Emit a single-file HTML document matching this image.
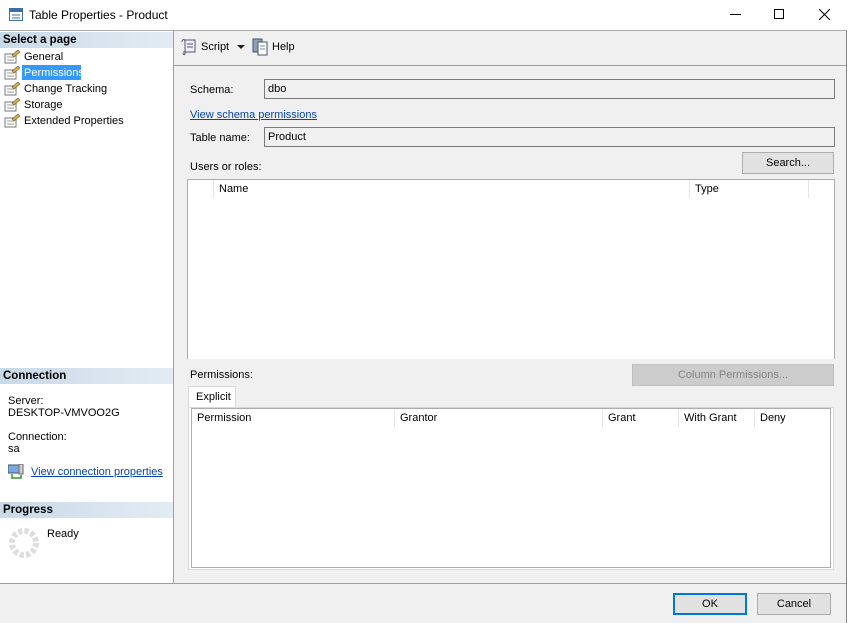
<!DOCTYPE html>
<html><head><style>
*{margin:0;padding:0;box-sizing:border-box}
body{width:851px;height:623px;background:#fff;font-family:"Liberation Sans",sans-serif;font-size:11px;color:#000;position:relative;overflow:hidden}
.a{position:absolute}
.hdr{position:absolute;left:0;width:173px;height:16px;background:linear-gradient(to right,#c9d9e8,#e3ecf4);font-weight:bold;font-size:11.5px;padding:2px 3px;color:#000}
.ico{position:absolute;width:16px;height:14px}
.nav{position:absolute;left:24px}
.inp{position:absolute;left:264px;width:571px;height:20px;border:1px solid #7a7a7a;background:#f0f0f0;padding:3px 3px}
.btn{position:absolute;background:#e1e1e1;border:1px solid #adadad;text-align:center;line-height:20px}
.col{position:absolute;top:0;height:18px;border-left:1px solid #e5e5e5;padding:3px 5px}
a{color:#0645ad;text-decoration:underline}
</style></head><body>
<svg class="a" style="left:9px;top:8px" width="14" height="13"><rect x="0.5" y="0.5" width="13" height="12" fill="#fff" stroke="#3c6ea8"/><rect x="1" y="1" width="12" height="3" fill="#3c6ea8"/><line x1="3" y1="7" x2="11" y2="7" stroke="#3c6ea8"/><line x1="3" y1="10" x2="11" y2="10" stroke="#3c6ea8"/></svg>
<div class="a" style="left:29px;top:8px;font-size:12px">Table Properties - Product</div>
<div class="a" style="left:730px;top:14px;width:11px;height:1px;background:#000"></div>
<div class="a" style="left:774px;top:9px;width:10px;height:10px;border:1px solid #000"></div>
<svg class="a" style="left:819px;top:9px" width="11" height="11"><path d="M0 0L11 11M11 0L0 11" stroke="#000"/></svg>
<div class="a" style="left:0;top:30px;width:851px;height:1px;background:#aaa"></div>
<div class="a" style="left:846px;top:30px;width:5px;height:593px;background:#fff;border-left:1px solid #888"></div>
<div class="a" style="left:173px;top:31px;width:1px;height:552px;background:#a0a0a0"></div>
<div class="hdr" style="top:32px">Select a page</div>
<div class="ico" style="left:4px;top:50px"><svg width="16" height="14"><rect x="1" y="4" width="11" height="9" fill="#fff" stroke="#777"/><line x1="3" y1="7" x2="10" y2="7" stroke="#999"/><line x1="3" y1="10" x2="10" y2="10" stroke="#999"/><path d="M8 5L14 0L16 2L10 7Z" fill="#e8b030" stroke="#555" stroke-width=".6"/></svg></div>
<div class="nav" style="top:51px">General</div>
<div class="ico" style="left:4px;top:66px"><svg width="16" height="14"><rect x="1" y="4" width="11" height="9" fill="#fff" stroke="#777"/><line x1="3" y1="7" x2="10" y2="7" stroke="#999"/><line x1="3" y1="10" x2="10" y2="10" stroke="#999"/><path d="M8 5L14 0L16 2L10 7Z" fill="#e8b030" stroke="#555" stroke-width=".6"/></svg></div>
<div class="a" style="left:22px;top:65px;width:59px;height:15px;background:#3399ff"></div>
<div class="nav" style="top:67px;color:#fff">Permissions</div>
<div class="ico" style="left:4px;top:82px"><svg width="16" height="14"><rect x="1" y="4" width="11" height="9" fill="#fff" stroke="#777"/><line x1="3" y1="7" x2="10" y2="7" stroke="#999"/><line x1="3" y1="10" x2="10" y2="10" stroke="#999"/><path d="M8 5L14 0L16 2L10 7Z" fill="#e8b030" stroke="#555" stroke-width=".6"/></svg></div>
<div class="nav" style="top:83px">Change Tracking</div>
<div class="ico" style="left:4px;top:98px"><svg width="16" height="14"><rect x="1" y="4" width="11" height="9" fill="#fff" stroke="#777"/><line x1="3" y1="7" x2="10" y2="7" stroke="#999"/><line x1="3" y1="10" x2="10" y2="10" stroke="#999"/><path d="M8 5L14 0L16 2L10 7Z" fill="#e8b030" stroke="#555" stroke-width=".6"/></svg></div>
<div class="nav" style="top:99px">Storage</div>
<div class="ico" style="left:4px;top:114px"><svg width="16" height="14"><rect x="1" y="4" width="11" height="9" fill="#fff" stroke="#777"/><line x1="3" y1="7" x2="10" y2="7" stroke="#999"/><line x1="3" y1="10" x2="10" y2="10" stroke="#999"/><path d="M8 5L14 0L16 2L10 7Z" fill="#e8b030" stroke="#555" stroke-width=".6"/></svg></div>
<div class="nav" style="top:115px">Extended Properties</div>
<div class="hdr" style="top:368px">Connection</div>
<div class="a" style="left:8px;top:395px">Server:<br>DESKTOP-VMVOO2G</div>
<div class="a" style="left:8px;top:431px">Connection:<br>sa</div>
<svg class="a" style="left:8px;top:464px" width="16" height="16"><rect x="0" y="1" width="11" height="8" fill="#7aa8e0" stroke="#456"/><rect x="11" y="0" width="4" height="10" fill="#ccc" stroke="#666"/><path d="M4 10V14H13V11" stroke="#2a9a2a" fill="none" stroke-width="1.5"/></svg>
<div class="a" style="left:31px;top:466px"><a>View connection properties</a></div>
<div class="hdr" style="top:502px">Progress</div>
<svg class="a" style="left:8px;top:527px" width="32" height="32"><circle cx="16" cy="16" r="12" fill="none" stroke="#ddd" stroke-width="6" stroke-dasharray="4 2.3"/></svg>
<div class="a" style="left:47px;top:528px">Ready</div>
<div class="a" style="left:174px;top:31px;width:672px;height:552px;background:#f0f0f0"></div>
<svg class="a" style="left:180px;top:38px" width="18" height="18"><path d="M4 2H15V14H3" fill="#eef" stroke="#556"/><path d="M2 4C2 1 5 1 5 3V16C5 17 3 17 3 15" fill="none" stroke="#556"/><line x1="7" y1="6" x2="13" y2="6" stroke="#556"/><line x1="7" y1="9" x2="13" y2="9" stroke="#556"/></svg>
<div class="a" style="left:201px;top:41px">Script</div>
<svg class="a" style="left:237px;top:45px" width="8" height="5"><path d="M0 0H8L4 4Z" fill="#222"/></svg>
<svg class="a" style="left:252px;top:38px" width="18" height="18"><rect x="1" y="1" width="9" height="13" fill="#8aa0c0" stroke="#456"/><rect x="6" y="4" width="9" height="13" fill="#fff" stroke="#456"/><line x1="8" y1="8" x2="13" y2="8" stroke="#789"/><line x1="8" y1="11" x2="13" y2="11" stroke="#789"/></svg>
<div class="a" style="left:272px;top:41px">Help</div>
<div class="a" style="left:174px;top:65px;width:672px;height:1px;background:#a0a0a0"></div>
<div class="a" style="left:190px;top:84px">Schema:</div>
<div class="inp" style="top:79px">dbo</div>
<div class="a" style="left:190px;top:109px"><a>View schema permissions</a></div>
<div class="a" style="left:190px;top:132px">Table name:</div>
<div class="inp" style="top:127px">Product</div>
<div class="a" style="left:190px;top:161px">Users or roles:</div>
<div class="btn" style="left:742px;top:152px;width:92px;height:22px">Search...</div>
<div class="a" style="left:187px;top:179px;width:648px;height:180px;background:#fff;border:1px solid #adadad;border-bottom:none">
 <div class="col" style="left:25px;width:476px">Name</div>
 <div class="col" style="left:501px;width:119px">Type</div>
 <div class="col" style="left:620px;width:1px;padding:0"></div>
</div>
<div class="a" style="left:190px;top:369px">Permissions:</div>
<div class="btn" style="left:632px;top:364px;width:202px;height:22px;background:#ccc;border-color:#bfbfbf;color:#838383">Column Permissions...</div>
<div class="a" style="left:188px;top:386px;width:48px;height:22px;background:#fff;border:1px solid #d9d9d9;border-bottom:none;padding:4px 7px">Explicit</div>
<div class="a" style="left:188px;top:407px;width:646px;height:163px;background:#fff;border:1px solid #d9d9d9"></div>
<div class="a" style="left:191px;top:408px;width:640px;height:160px;background:#fff;border:1px solid #adadad">
 <div class="col" style="left:0;width:202px;border-left:none">Permission</div>
 <div class="col" style="left:202px;width:208px">Grantor</div>
 <div class="col" style="left:410px;width:76px">Grant</div>
 <div class="col" style="left:486px;width:76px">With Grant</div>
 <div class="col" style="left:562px;width:78px">Deny</div>
</div>
<div class="a" style="left:0;top:583px;width:846px;height:40px;background:#f0f0f0;border-top:1px solid #a0a0a0"></div>
<div class="btn" style="left:673px;top:593px;width:74px;height:22px;border:2px solid #0078d7;line-height:19px">OK</div>
<div class="btn" style="left:757px;top:593px;width:74px;height:22px;line-height:21px">Cancel</div>
</body></html>
